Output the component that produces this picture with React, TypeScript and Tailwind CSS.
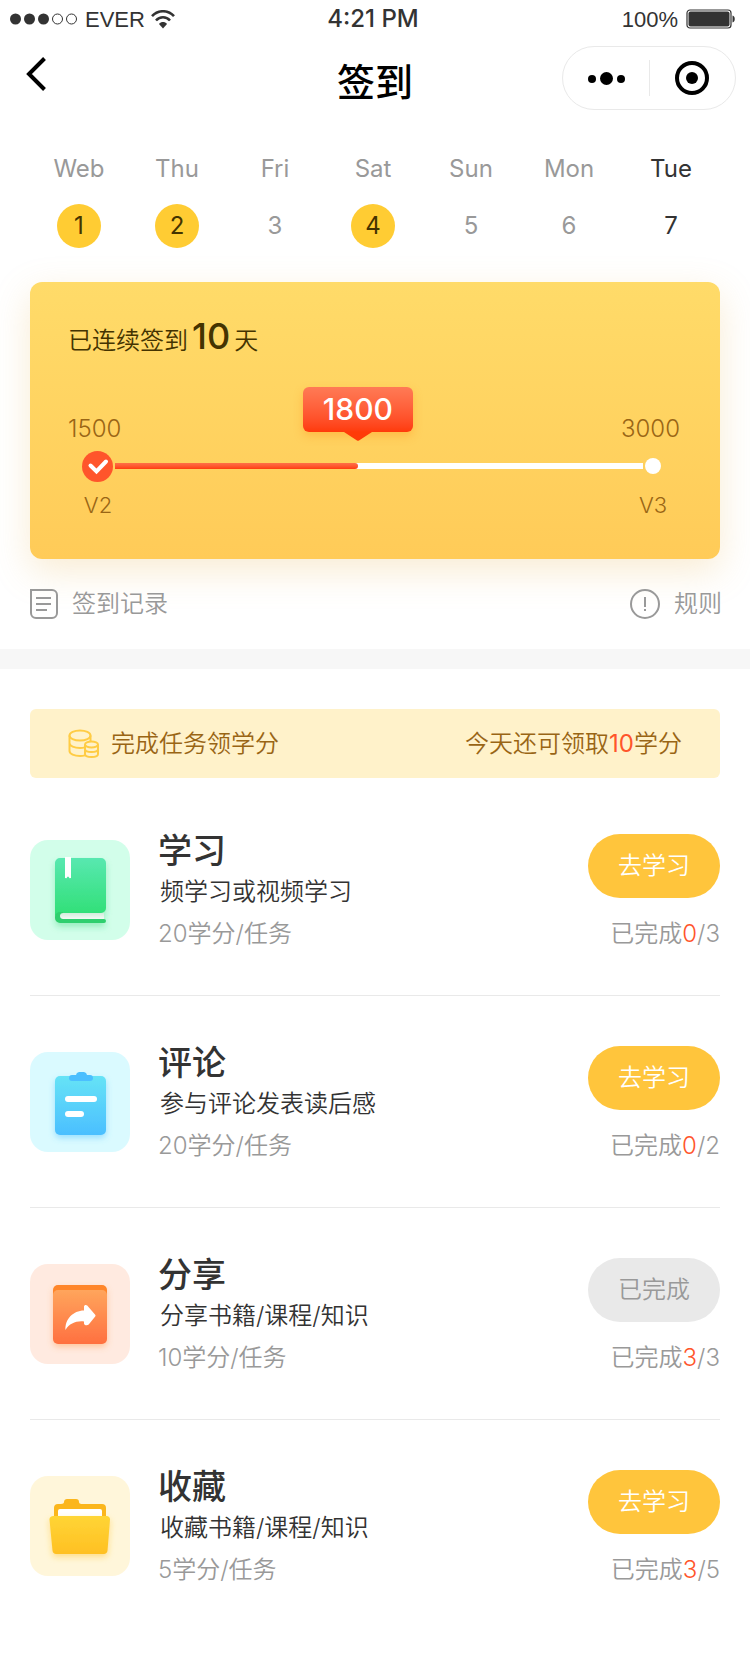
import type { ReactNode } from 'react';
import clsx from 'clsx';

type Day = { name: string; date: number; signed?: boolean; today?: boolean };

type Task = {
  title: string;
  desc: string;
  reward: string;
  done: number;
  total: number;
  tile: string;
  icon: ReactNode;
};

const days: Day[] = [
  { name: 'Web', date: 1, signed: true },
  { name: 'Thu', date: 2, signed: true },
  { name: 'Fri', date: 3 },
  { name: 'Sat', date: 4, signed: true },
  { name: 'Sun', date: 5 },
  { name: 'Mon', date: 6 },
  { name: 'Tue', date: 7, today: true },
];

const tasks: Task[] = [
  { title: '学习', desc: '频学习或视频学习', reward: '20学分/任务', done: 0, total: 3, tile: 'bg-[#d2feea]', icon: <BookIcon /> },
  { title: '评论', desc: '参与评论发表读后感', reward: '20学分/任务', done: 0, total: 2, tile: 'bg-[#dafaff]', icon: <ClipboardIcon /> },
  { title: '分享', desc: '分享书籍/课程/知识', reward: '10学分/任务', done: 3, total: 3, tile: 'bg-[#ffeae0]', icon: <ShareIcon /> },
  { title: '收藏', desc: '收藏书籍/课程/知识', reward: '5学分/任务', done: 3, total: 5, tile: 'bg-[#fff6da]', icon: <FolderIcon /> },
];

function BookIcon() {
  return (
    <svg viewBox="0 0 100 100" className="w-full h-full" aria-hidden="true">
      <defs>
        <linearGradient id="book" x1="0" y1="0" x2="0" y2="1">
          <stop offset="0" stopColor="#58e8b0" />
          <stop offset="1" stopColor="#2fdf74" />
        </linearGradient>
        <linearGradient id="pages" x1="0" y1="0" x2="0" y2="1">
          <stop offset="0" stopColor="#d3ecdc" />
          <stop offset="1" stopColor="#f4faf6" />
        </linearGradient>
        <filter id="bookShadow" x="-30%" y="-30%" width="160%" height="160%">
          <feDropShadow dx="0" dy="4" stdDeviation="3" floodColor="#2fd070" floodOpacity="0.35" />
        </filter>
      </defs>
      <g filter="url(#bookShadow)">
        <path d="M33 73H74V79H33a3 3 0 0 1 0-6Z" fill="url(#pages)" />
        <path d="M30 18H71a5 5 0 0 1 5 5V68a5 5 0 0 1-5 5H31c-3 0-6 2-6 5V23a5 5 0 0 1 5-5Z" fill="url(#book)" />
        <path d="M25 77a5 5 0 0 1 5-5h3v1a3 3 0 0 0 0 6h41a2 2 0 0 1 0 4H30a5 5 0 0 1-5-5Z" fill="#2ecf6e" />
      </g>
      <path d="M35 17h6v21l-1.500.3Q38 34.600 36.500 38.300L35 38Z" fill="#fff" />
    </svg>
  );
}

function ClipboardIcon() {
  return (
    <svg viewBox="0 0 100 100" className="w-full h-full" aria-hidden="true">
      <defs>
        <linearGradient id="clip" x1="0" y1="0" x2="0" y2="1">
          <stop offset="0" stopColor="#66e3f6" />
          <stop offset="1" stopColor="#4bbfff" />
        </linearGradient>
        <filter id="clipShadow" x="-30%" y="-30%" width="160%" height="160%">
          <feDropShadow dx="0" dy="3" stdDeviation="3" floodColor="#4bbfff" floodOpacity="0.45" />
        </filter>
      </defs>
      <rect x="25" y="24" width="51" height="59" rx="5" fill="url(#clip)" filter="url(#clipShadow)" />
      <path d="M42 23h4a3.500 3.500 0 0 1 3-3h5a3.500 3.500 0 0 1 3 3h3a3 3 0 0 1 0 6H42a3 3 0 0 1 0-6Z" fill="#4bbfff" />
      <rect x="35" y="44" width="32" height="6" rx="3" fill="#fff" />
      <rect x="35" y="59" width="19" height="6" rx="3" fill="#fff" />
    </svg>
  );
}

function ShareIcon() {
  return (
    <svg viewBox="0 0 100 100" className="w-full h-full" aria-hidden="true">
      <defs>
        <linearGradient id="share" x1="0" y1="0" x2="0" y2="1">
          <stop offset="0" stopColor="#ffa55c" />
          <stop offset="1" stopColor="#ff7040" />
        </linearGradient>
        <filter id="shareShadow" x="-30%" y="-30%" width="160%" height="160%">
          <feDropShadow dx="0" dy="3" stdDeviation="3" floodColor="#ff9a4c" floodOpacity="0.45" />
        </filter>
      </defs>
      <g filter="url(#shareShadow)">
        <rect x="23" y="21" width="54" height="30" rx="5" fill="#ff8629" />
        <rect x="23" y="26" width="54" height="54" rx="5" fill="url(#share)" />
      </g>
      <path
        d="M54 42.500c0-1.500 2-2.200 3.200-1l8 9.200c.5.600.5 1.200 0 1.800l-6.500 8c-1.500 1.500-4.700.8-4.700-1V57.500c-8-.8-14.500 2-18.500 8.500-.8-10.500 7.500-19.500 18.500-19.500Z"
        fill="#fff"
      />
    </svg>
  );
}

function FolderIcon() {
  return (
    <svg viewBox="0 0 100 100" className="w-full h-full" aria-hidden="true">
      <defs>
        <linearGradient id="folder" x1="0" y1="0" x2="0" y2="1">
          <stop offset="0" stopColor="#ffd535" />
          <stop offset="1" stopColor="#ffc023" />
        </linearGradient>
        <filter id="folderShadow" x="-30%" y="-30%" width="160%" height="160%">
          <feDropShadow dx="0" dy="3" stdDeviation="3" floodColor="#ffc023" floodOpacity="0.45" />
        </filter>
      </defs>
      <path d="M24 50V32a4 4 0 0 1 4-4h3c2 0 3-.8 3-2 0-2 1.500-3 3-3h9c2 0 3 1 3 3 0 1.200 1 2 2.500 2H72a4 4 0 0 1 4 4V50Z" fill="#fbb61c" />
      <path d="M28 45V35a2 2 0 0 1 2-2H70a2 2 0 0 1 2 2V45Z" fill="#fff" />
      <path
        d="M23.500 40h53c2.200 0 3.600 1.500 3.500 3.500L77.500 74.500c-.2 2-1.700 3.500-3.500 3.500H26c-1.800 0-3.300-1.500-3.500-3.500L19.500 43.500c-.2-2 1.500-3.500 4-3.500Z"
        fill="url(#folder)"
        filter="url(#folderShadow)"
      />
    </svg>
  );
}

function StatusBar() {
  return (
    <div className="grid grid-cols-3 items-center h-[38px] pl-[10px] pr-[14px] text-[#333]">
      <div className="flex items-center">
        <svg width="68" height="12" viewBox="0 0 68 12" aria-hidden="true">
          <g fill="#333">
            <circle cx="5.500" cy="6" r="5.500" />
            <circle cx="19.500" cy="6" r="5.500" />
            <circle cx="33.500" cy="6" r="5.500" />
          </g>
          <g fill="none" stroke="#333">
            <circle cx="47.500" cy="6" r="5" />
            <circle cx="61.500" cy="6" r="5" />
          </g>
        </svg>
        <span className="ml-[7px] font-['Liberation_Sans',sans-serif] text-[22px]">EVER</span>
        <svg className="ml-[6px]" width="24" height="19" viewBox="0 0 24 19" aria-hidden="true">
          <g fill="none" stroke="#333" strokeWidth="2.600">
            <path d="M1 6.200C7-.4 17-.4 23 6.200" />
            <path d="M5 10.500c3.800-4.300 10.200-4.300 14 0" />
          </g>
          <path d="M8 14c2.200-2.600 5.800-2.600 8 0l-4 4.500Z" fill="#333" />
        </svg>
      </div>
      <span className="text-center text-[24px] font-medium">4:21 PM</span>
      <div className="flex items-center justify-end">
        <span className="font-['Liberation_Sans',sans-serif] text-[22px]">100%</span>
        <svg className="ml-2" width="50" height="20" viewBox="0 0 50 20" aria-hidden="true">
          <rect x="1" y="1" width="44" height="18" rx="3" fill="none" stroke="#333" strokeWidth="1.200" />
          <rect x="2.500" y="2.500" width="41" height="15" rx="2" fill="#333" />
          <path d="M46.500 6.500c3 .8 3 6.200 0 7Z" fill="#333" />
        </svg>
      </div>
    </div>
  );
}

function Header() {
  return (
    <header className="grid grid-cols-[1fr_auto_1fr] items-center h-20 px-[14px]">
      <button type="button" aria-label="返回" className="w-6 h-10 ml-[10px] -mt-2">
        <svg width="24" height="40" viewBox="0 0 24 40" fill="none" aria-hidden="true">
          <path d="M20.500 4.500L5 20l15.500 15.500" stroke="#000" strokeWidth="4" />
        </svg>
      </button>
      <h1 className="pt-2 text-[38px] leading-[60px] font-medium text-black">签到</h1>
      <div className="justify-self-end flex items-center w-[174px] h-16 rounded-full border border-[#e9e9e9]">
        <button type="button" aria-label="更多" className="flex-1 flex justify-center">
          <svg width="40" height="16" viewBox="0 0 40 16" aria-hidden="true">
            <circle cx="6" cy="9" r="4" />
            <circle cx="20.500" cy="8.500" r="6.500" />
            <circle cx="35" cy="9" r="4" />
          </svg>
        </button>
        <span className="w-px h-9 bg-[#e9e9e9]" />
        <button type="button" aria-label="关闭" className="flex-1 flex justify-center">
          <svg width="34" height="34" viewBox="0 0 34 34" aria-hidden="true">
            <circle cx="17" cy="17" r="15" fill="none" stroke="#000" strokeWidth="4" />
            <circle cx="17" cy="17" r="6" />
          </svg>
        </button>
      </div>
    </header>
  );
}

function WeekRow() {
  return (
    <ul className="grid grid-cols-[repeat(6,49fr)_53fr] pt-9 pl-[30px] pr-[26px] text-[24px] leading-[30px]">
      {days.map((day) => (
        <li
          key={day.name}
          className={clsx('flex flex-col items-center gap-5', day.today ? 'text-[#333]' : 'text-[#999]')}
        >
          <span>{day.name}</span>
          <span
            className={clsx(
              'w-11 h-11 rounded-full flex items-center justify-center',
              day.signed && 'bg-[#ffcc33] text-[#443300]'
            )}
          >
            {day.date}
          </span>
        </li>
      ))}
    </ul>
  );
}

function StreakCard({ points, progress }: { points: number; progress: number }) {
  return (
    <section className="mx-[30px] mt-[34px] h-[277px] rounded-xl bg-linear-to-b from-[#ffdb69] to-[#ffcb58] shadow-[0_12px_36px_rgba(230,180,80,0.25)]">
      <p className="flex items-baseline px-[38px] pt-[29px] text-[24px] leading-[50px] font-[350] text-[#443300]">
        已连续签到
        <span className="mx-1 text-[36px] font-medium">10</span>
        天
      </p>
      <div className="flex justify-between pl-[38px] pr-10 pt-[48px] text-[24px] leading-[30px] font-light text-[#996515]">
        <span>1500</span>
        <span>3000</span>
      </div>
      <div className="flex items-center gap-[2px] h-8 mt-[6px] pl-[52px] pr-[59px]">
        <svg width="31" height="31" viewBox="0 0 31 31" aria-hidden="true">
          <circle cx="15.500" cy="15.500" r="15.500" fill="#ff552b" />
          <path d="M8.500 14.500l6 6L24 10.500" fill="none" stroke="#fff" strokeWidth="4" strokeLinecap="round" />
        </svg>
        <div className="relative flex-1 h-[6px] bg-white">
          <div
            className="relative h-full rounded-r-full bg-linear-to-b from-[#ff6f47] to-[#ff3c0a]"
            style={{ width: `${progress}%` }}
          >
            <div className="absolute right-0 bottom-[37px] translate-x-1/2 w-[110px] h-[45px] rounded-md bg-linear-to-b from-[#ff7a55] to-[#ff3a08] shadow-[0_4px_10px_rgba(255,150,30,0.4)] text-center text-[30px] leading-[45px] font-medium text-white">
              {points}
              <svg className="absolute top-full left-1/2 -translate-x-1/2" width="28" height="9" viewBox="0 0 28 9" aria-hidden="true">
                <path d="M0 0H28L15 8.500Q14 9.200 13 8.500Z" fill="#ff3a08" />
              </svg>
            </div>
          </div>
        </div>
        <span className="w-4 h-4 rounded-full bg-white" />
      </div>
      <div className="flex justify-between pt-2 pl-[52px] pr-[51px] text-[22px] leading-[30px] font-light text-[#996515]">
        <span className="w-8 text-center">V2</span>
        <span className="w-8 text-center">V3</span>
      </div>
    </section>
  );
}

function CardLinks() {
  return (
    <nav className="flex justify-between pl-[30px] pr-7 pt-[26px] pb-[26px] text-[24px] leading-[38px] font-[350] text-[#999]">
      <a href="#records" className="flex items-center gap-[14px]">
        <svg width="28" height="30" viewBox="0 0 28 30" fill="none" stroke="#999" strokeWidth="2" aria-hidden="true">
          <path d="M1 1H22a5 5 0 0 1 5 5V24a5 5 0 0 1-5 5H6a5 5 0 0 1-5-5Z" />
          <path d="M6 9H21M6 15H21M6 21H17" />
        </svg>
        签到记录
      </a>
      <a href="#rules" className="flex items-center gap-[14px]">
        <svg width="30" height="30" viewBox="0 0 30 30" fill="none" stroke="#999" strokeWidth="2" aria-hidden="true">
          <circle cx="15" cy="15" r="14" />
          <path d="M15 8V18M15 20V22" />
        </svg>
        规则
      </a>
    </nav>
  );
}

function RewardBanner() {
  return (
    <div className="flex items-center justify-between h-[69px] px-[38px] rounded-md bg-[#fff2ca] text-[24px] leading-[38px] font-[350] text-[#996515]">
      <div className="flex items-center gap-[12px]">
        <svg width="31" height="29" viewBox="0 0 31 29" fill="none" stroke="#ffcc44" strokeWidth="2" aria-hidden="true">
          <ellipse cx="12" cy="6.500" rx="10.500" ry="5" />
          <path d="M1.500 6.500V22c0 3 5 5 10.500 5 2 0 3.500-.2 5-.6M22.500 6.500V12M1.500 14c0 3 5 5 10.500 5 2 0 3.500-.2 5-.6" />
          <ellipse cx="23.500" cy="15.500" rx="6.500" ry="3" />
          <path d="M17 15.500V25c0 2 3 3 6.500 3s6.500-1 6.500-3V15.500M17 20c0 2 3 3 6.500 3s6.500-1 6.500-3" />
        </svg>
        完成任务领学分
      </div>
      <p>
        今天还可领取<span className="font-normal text-[#ff552b]">10</span>学分
      </p>
    </div>
  );
}

function TaskRow({ task }: { task: Task }) {
  const finished = task.done >= task.total;

  return (
    <li className="flex pt-[46px] pb-[39px] border-b border-[#e9e9e9] last:border-b-0">
      <div className={clsx('w-[100px] h-[100px] mt-[10px] rounded-[18px] shrink-0', task.tile)}>{task.icon}</div>
      <div className="flex-1 ml-7 text-[24px] font-[350]">
        <h2 className="text-[34px] leading-[42px] font-medium text-[#333]">{task.title}</h2>
        <p className="pl-[2px] leading-[40px] text-[#333]">{task.desc}</p>
        <p className="leading-[44px] text-[#999]">{task.reward}</p>
      </div>
      <div className="flex flex-col items-end justify-between pt-1 text-[24px] font-[350]">
        <button
          type="button"
          disabled={finished}
          className={clsx(
            'w-[132px] h-16 rounded-full',
            finished ? 'bg-[#e9e9e9] text-[#999]' : 'bg-[#ffc53c] text-white'
          )}
        >
          {finished ? '已完成' : '去学习'}
        </button>
        <p className="leading-[44px] text-[#999]">
          已完成<span className="text-[#ff552b]">{task.done}</span>/{task.total}
        </p>
      </div>
    </li>
  );
}

export default function App() {
  return (
    <div className="min-h-screen bg-white font-['Inter','Noto_Sans_CJK_SC',sans-serif]">
      <StatusBar />
      <Header />
      <WeekRow />
      <StreakCard points={1800} progress={46} />
      <CardLinks />
      <div className="h-5 bg-[#f7f7f7]" />
      <main className="px-[30px] pt-10 pb-6">
        <RewardBanner />
        <ul className="mt-[6px]">
          {tasks.map((task) => (
            <TaskRow key={task.title} task={task} />
          ))}
        </ul>
      </main>
    </div>
  );
}
